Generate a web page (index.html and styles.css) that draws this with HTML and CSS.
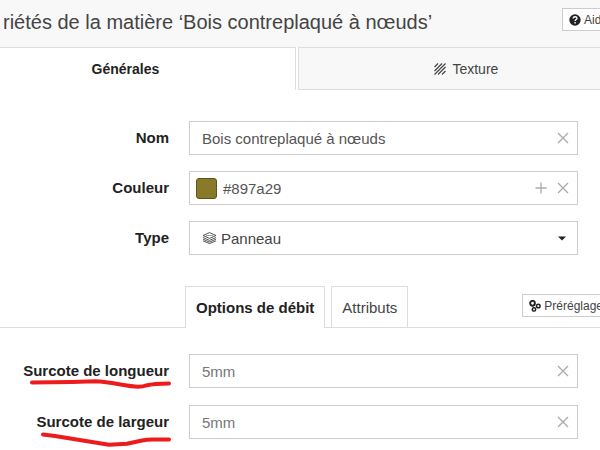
FILE: index.html
```html
<!DOCTYPE html>
<html lang="fr">
<head>
    <meta charset="UTF-8">
    <meta name="viewport" content="width=device-width, initial-scale=1.0">
    <title>Propriétés de la matière</title>
    <link rel="stylesheet" href="styles.css">
</head>
<body>
    <header class="header">
        <h1 class="title">riétés de la matière ‘Bois contreplaqué à nœuds’</h1>
        <button type="button" class="btn btn-help">
            <svg width="12" height="12" viewBox="0 0 12 12">
                <circle cx="6" cy="6" r="5.7" fill="#222"/>
                <path d="M4.1 4.5c.1-1.2 1-1.7 2-1.7 1.100 0 1.900.6 1.900 1.500 0 1.200-1.900 1.300-1.900 2.600M6.100 8v1.400" fill="none" stroke="#fff" stroke-width="1.400"/>
            </svg>
            Aide
        </button>
    </header>

    <nav class="main-tabs">
        <button type="button" class="main-tab active">Générales</button>
        <button type="button" class="main-tab">
            <svg width="12" height="12" viewBox="0 0 12 12">
                <path d="M.5 4 4 .5M.5 8 8 .5M.5 11.500 11.500.5M4 11.500 11.500 4M8 11.500 11.500 8" fill="none" stroke="#444" stroke-width="1.200"/>
            </svg>
            Texture
        </button>
    </nav>

    <form class="form">
        <div class="row">
            <label class="label" for="nom">Nom</label>
            <div class="field">
                <input type="text" id="nom" value="Bois contreplaqué à nœuds">
                <button type="button" class="icon-btn" aria-label="Effacer">
                    <svg width="12" height="12" viewBox="0 0 12 12"><path d="M1 1l10 10M11 1L1 11"/></svg>
                </button>
            </div>
        </div>
        <div class="row">
            <label class="label" for="couleur">Couleur</label>
            <div class="field field-color">
                <span class="swatch"></span>
                <input type="text" id="couleur" value="#897a29">
                <button type="button" class="icon-btn" aria-label="Ajouter">
                    <svg width="12" height="12" viewBox="0 0 12 12"><path d="M6 .5v11M.5 6h11"/></svg>
                </button>
                <button type="button" class="icon-btn" aria-label="Effacer">
                    <svg width="12" height="12" viewBox="0 0 12 12"><path d="M1 1l10 10M11 1L1 11"/></svg>
                </button>
            </div>
        </div>
        <div class="row">
            <label class="label" for="type">Type</label>
            <div class="field field-select">
                <svg class="layers" width="15" height="12" viewBox="0 0 15 12">
                    <path d="M7.500.6 14 3.500 7.500 6.400 1 3.500zM1 5.500l6.500 2.900L14 5.500M1 7.200l6.500 2.900L14 7.200M1 8.800l6.500 2.800L14 8.800" fill="none" stroke="#444" stroke-width=".9"/>
                    <path d="M4 3.500h7" stroke="#888" stroke-width=".8"/>
                </svg>
                <select id="type">
                    <option>Panneau</option>
                </select>
                <svg class="caret" width="8" height="5" viewBox="0 0 8 5"><path d="M0 .5h8L4 4.500z" fill="#222"/></svg>
            </div>
        </div>
    </form>

    <nav class="sub-tabs">
        <button type="button" class="sub-tab active">Options de débit</button>
        <button type="button" class="sub-tab">Attributs</button>
        <button type="button" class="btn btn-preset">
            <svg width="12" height="12" viewBox="0 0 12 12" fill="none" stroke="#222">
                <circle cx="3.500" cy="3.300" r="2.400" stroke-width="1.900"/>
                <circle cx="9.300" cy="6" r="1.800" stroke-width="1.500"/>
                <circle cx="5" cy="9.400" r="1.700" stroke-width="1.500"/>
            </svg>
            Préréglages
        </button>
    </nav>

    <form class="form form-options">
        <div class="row">
            <label class="label" for="longueur">Surcote de longueur
                <svg class="mark" width="180" height="50" viewBox="0 0 180 50">
                    <path d="M32 28.500 72 28 95 27.300Q104 27.500 122 30.800T146 31.500Q154 29.500 169 29.500"/>
                </svg>
            </label>
            <div class="field">
                <input type="text" id="longueur" placeholder="5mm">
                <button type="button" class="icon-btn" aria-label="Effacer">
                    <svg width="12" height="12" viewBox="0 0 12 12"><path d="M1 1l10 10M11 1L1 11"/></svg>
                </button>
            </div>
        </div>
        <div class="row">
            <label class="label" for="largeur">Surcote de largeur
                <svg class="mark" width="180" height="50" viewBox="0 0 180 50">
                    <path d="M43 29.500 55 31 109 39.800 127 38.800 142 35.500Q147 34.500 152 34.500H169"/>
                </svg>
            </label>
            <div class="field">
                <input type="text" id="largeur" placeholder="5mm">
                <button type="button" class="icon-btn" aria-label="Effacer">
                    <svg width="12" height="12" viewBox="0 0 12 12"><path d="M1 1l10 10M11 1L1 11"/></svg>
                </button>
            </div>
        </div>
    </form>
</body>
</html>
```
FILE: styles.css
```css
* {
    box-sizing: border-box;
}

body {
    margin: 0;
    font-family: "Liberation Sans", Arial, sans-serif;
    font-size: 15px;
    color: #444;
    background: #fff;
    overflow: hidden;
}

button,
input,
select {
    font: inherit;
    color: inherit;
}

button {
    cursor: pointer;
}

.header {
    display: flex;
    align-items: flex-start;
    justify-content: space-between;
    height: 47px;
    padding: 8px 0 0 3px;
    background: #f8f8f8;
}

.title {
    margin: 0;
    font-size: 20px;
    font-weight: normal;
    line-height: 28px;
    white-space: nowrap;
}

.btn {
    display: flex;
    flex-shrink: 0;
    align-items: center;
    gap: 3px;
    height: 23px;
    padding: 0 6px;
    font-size: 12px;
    white-space: nowrap;
    background: #fff;
    border: 1px solid #ccc;
}

.btn-help {
    margin-right: -15px;
}

/* Onglets principaux */
.main-tabs {
    display: flex;
    height: 43px;
}

.main-tab {
    display: flex;
    flex: 1;
    align-items: center;
    justify-content: center;
    gap: 6px;
    padding: 0;
    font-size: 14px;
    background: #f8f8f8;
    border: 1px solid #ddd;
    border-right: none;
}

.main-tab.active {
    flex: none;
    width: 49.3%;
    margin-right: 2px;
    padding-right: 44px;
    font-weight: bold;
    color: #222;
    background: #fff;
    border: 1px solid #ddd;
    border-left: none;
    border-bottom: none;
}

.main-tab:last-child {
    padding-left: 34px;
}

/* Formulaire */
.form {
    display: flex;
    flex-direction: column;
    gap: 16px;
    padding: 31px 22px 31px 0;
}

.form-options {
    gap: 17px;
    padding-top: 26px;
}

.row {
    display: grid;
    grid-template-columns: 169px 1fr;
    column-gap: 20px;
}

.label {
    position: relative;
    font-weight: bold;
    line-height: 34px;
    text-align: right;
    white-space: nowrap;
    color: #222;
}

.field {
    display: flex;
    align-items: center;
    height: 34px;
    padding: 0 8px 0 12px;
    background: #fff;
    border: 1px solid #ccc;
}

.field input {
    flex: 1;
    min-width: 0;
    height: 100%;
    padding: 0;
    color: #555;
    background: none;
    border: none;
    outline: none;
}

.field input::placeholder {
    color: #777;
    opacity: 1;
}

.field-color {
    padding-left: 6px;
}

.swatch {
    width: 21px;
    height: 21px;
    margin-right: 6px;
    background: #897a29;
    border: 1px solid #5f5418;
    border-radius: 3px;
}

.icon-btn {
    display: flex;
    margin-left: 10px;
    padding: 0;
    background: none;
    border: none;
}

.icon-btn svg {
    fill: none;
    stroke: #aaa;
    stroke-width: 1.3;
}

.field-select {
    gap: 4px;
    padding-right: 11px;
}

.field-select select {
    flex: 1;
    height: 100%;
    padding: 0;
    appearance: none;
    background: none;
    border: none;
    outline: none;
}

/* Onglets secondaires */
.sub-tabs {
    display: flex;
    gap: 6px;
    height: 42px;
    padding-left: 185px;
    border-bottom: 1px solid #ddd;
}

.sub-tab {
    flex-shrink: 0;
    padding: 0 10px;
    background: #fff;
    border: 1px solid #ddd;
    border-bottom: none;
}

.sub-tab.active {
    height: 42px;
    font-weight: bold;
    color: #222;
}

.btn-preset {
    margin: 8px -16px 0 auto;
}

/* Traits rouges sous les libellés */
.mark {
    position: absolute;
    top: 0;
    left: 0;
    fill: none;
    stroke: #ed1c1c;
    stroke-width: 4;
    stroke-linecap: round;
    stroke-linejoin: round;
    pointer-events: none;
}
```
